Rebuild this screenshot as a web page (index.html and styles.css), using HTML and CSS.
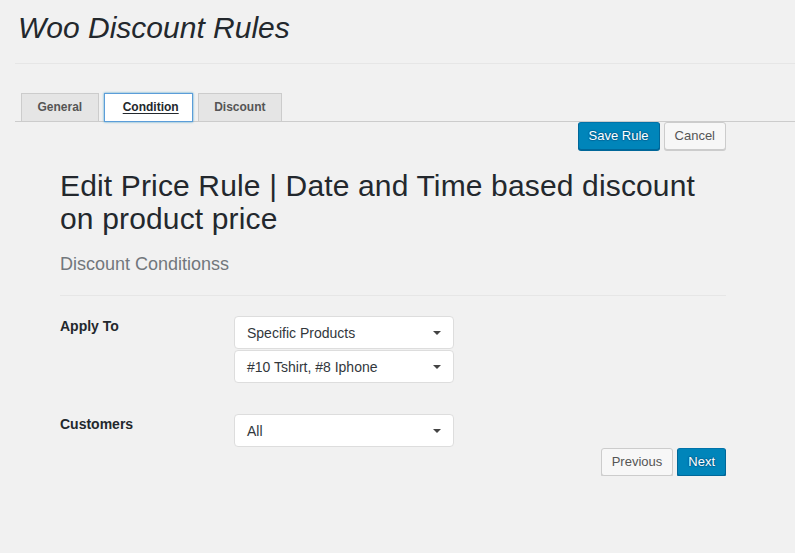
FILE: index.html
```html
<!DOCTYPE html>
<html lang="en">
<head>
<meta charset="utf-8">
<title>Woo Discount Rules</title>
<link rel="stylesheet" href="styles.css">
</head>
<body>
<div class="wrap">
  <h1 class="page-title">Woo Discount Rules</h1>
  <nav class="tabs">
    <a class="tab" href="#">General</a>
    <a class="tab tab-active" href="#"><span class="tab-label">Condition</span></a>
    <a class="tab" href="#">Discount</a>
  </nav>
  <div class="panel">
    <div class="actions actions-top">
      <button class="btn btn-primary" type="button">Save Rule</button>
      <button class="btn" type="button">Cancel</button>
    </div>
    <h2 class="rule-title">Edit Price Rule | Date and Time based discount on product price</h2>
    <h3 class="section-title">Discount Conditionss</h3>
    <div class="form">
      <div class="row">
        <label class="row-label">Apply To</label>
        <div class="fields">
          <div class="select">Specific Products<span class="caret"></span></div>
          <div class="select">#10 Tshirt, #8 Iphone<span class="caret"></span></div>
        </div>
      </div>
      <div class="row">
        <label class="row-label">Customers</label>
        <div class="fields">
          <div class="select">All<span class="caret"></span></div>
        </div>
      </div>
    </div>
    <div class="actions actions-bottom">
      <button class="btn" type="button">Previous</button>
      <button class="btn btn-primary" type="button">Next</button>
    </div>
  </div>
</div>
</body>
</html>
```
FILE: styles.css
```css
* { box-sizing: border-box; }
html, body {
  margin: 0;
  padding: 0;
  background: #f1f1f1;
  font-family: "Liberation Sans", Arial, sans-serif;
  color: #23282d;
}
.wrap {
  padding-left: 15px;
}
.page-title {
  margin: 0;
  padding: 8px 0 16px 3px;
  font-size: 30px;
  line-height: 39px;
  font-style: italic;
  font-weight: 400;
  color: #23282d;
  border-bottom: 1px solid #e6e6e6;
}
.tabs {
  display: flex;
  gap: 5px;
  margin-top: 29px;
  padding-left: 6px;
  border-bottom: 1px solid #ccc;
  height: 29px;
}
.tab {
  display: block;
  height: 29px;
  padding: 0 15.5px;
  border: 1px solid #ccc;
  background: #e5e5e5;
  color: #555;
  font-size: 12px;
  font-weight: 700;
  line-height: 26px;
  text-decoration: none;
}
.tab-active {
  background: #fff;
  border-color: #5b9dd9;
  box-shadow: 0 0 2px rgba(30, 140, 190, 0.8);
  color: #23282d;
  padding: 0 13px 0 18px;
  height: 29px;
  position: relative;
}
.tab-label {
  text-decoration: underline;
  text-underline-offset: 2px;
}
.panel {
  margin-left: 45px;
  width: 666px;
}
.actions {
  display: flex;
  justify-content: flex-end;
  gap: 4px;
}
.actions-top {
  margin-top: 0;
}
.actions-bottom {
  margin-top: 1px;
}
.btn {
  height: 28px;
  padding: 0 10px 1px;
  border: 1px solid #ccc;
  border-radius: 3px;
  background: #f7f7f7;
  box-shadow: 0 1px 0 #ccc;
  color: #555;
  font-family: "Liberation Sans", Arial, sans-serif;
  font-size: 13px;
  line-height: 26px;
  cursor: pointer;
}
.btn-primary {
  background: #0085ba;
  border-color: #0073aa #006799 #006799;
  box-shadow: 0 1px 0 #006799;
  color: #fff;
  text-shadow: 0 -1px 1px #006799, 1px 0 1px #006799, 0 1px 1px #006799, -1px 0 1px #006799;
}
.rule-title {
  margin: 19px 0 0;
  font-size: 30px;
  line-height: 33px;
  font-weight: 400;
  letter-spacing: 0.15px;
  color: #23282d;
}
.section-title {
  margin: 17px 0 0;
  padding-bottom: 19px;
  font-size: 18px;
  line-height: 24px;
  font-weight: 400;
  color: #72777c;
  border-bottom: 1px solid #e6e6e6;
}
.form {
  padding-top: 20px;
  display: flex;
  flex-direction: column;
  gap: 31px;
}
.row {
  display: flex;
}
.row-label {
  width: 174px;
  padding-top: 0;
  font-size: 14px;
  line-height: 20px;
  font-weight: 700;
  color: #23282d;
}
.fields {
  display: flex;
  flex-direction: column;
  gap: 1px;
}
.select {
  position: relative;
  width: 220px;
  height: 33px;
  padding-left: 12px;
  background: #fff;
  border: 1px solid #ddd;
  border-radius: 4px;
  font-size: 14px;
  line-height: 32px;
  color: #32373c;
}
.caret {
  position: absolute;
  right: 12px;
  top: 14px;
  width: 0;
  height: 0;
  border-left: 4px solid transparent;
  border-right: 4px solid transparent;
  border-top: 4px solid #444;
}
```
